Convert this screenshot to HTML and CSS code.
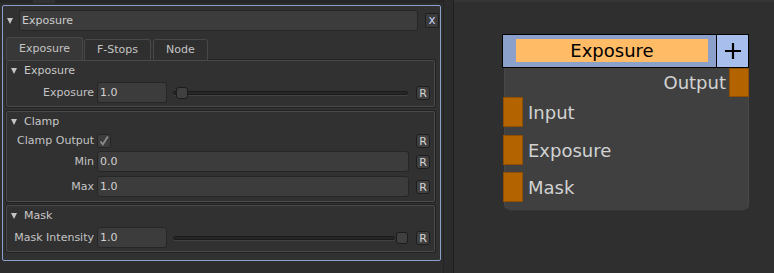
FILE: index.html
```html
<!DOCTYPE html>
<html>
<head>
<meta charset="utf-8">
<link rel="stylesheet" href="styles.css">
</head>
<body>
<div class="app">
  <div class="left">
    <div class="topstrip"><div class="topblock"></div></div>
    <div class="panel">
      <div class="titlebar">
        <span class="tri tri-big"></span>
        <div class="namefield">Exposure</div>
        <div class="close">x</div>
      </div>
      <div class="tabs">
        <div class="tab active">Exposure</div>
        <div class="tab">F-Stops</div>
        <div class="tab">Node</div>
      </div>
      <div class="tabbody">
        <div class="group g-exp">
          <div class="ghead"><span class="tri"></span><span>Exposure</span></div>
          <div class="row">
            <div class="lbl">Exposure</div>
            <div class="field short">1.0</div>
            <div class="slider">
              <div class="track"></div>
              <div class="knob knob-left"></div>
            </div>
            <div class="rbtn">R</div>
          </div>
        </div>
        <div class="group g-clamp">
          <div class="ghead"><span class="tri"></span><span>Clamp</span></div>
          <div class="row row-chk">
            <div class="lbl">Clamp Output</div>
            <div class="chk"><svg width="12" height="12" viewBox="0 0 12 12"><path d="M2.5 6.5L4.8 9.5L9.8 1.5" stroke="#8c8c8c" stroke-width="1.8" fill="none"/></svg></div>
            <div class="rbtn">R</div>
          </div>
          <div class="row">
            <div class="lbl">Min</div>
            <div class="field long">0.0</div>
            <div class="rbtn">R</div>
          </div>
          <div class="row row-gap">
            <div class="lbl">Max</div>
            <div class="field long">1.0</div>
            <div class="rbtn">R</div>
          </div>
        </div>
        <div class="group g-mask">
          <div class="ghead"><span class="tri"></span><span>Mask</span></div>
          <div class="row">
            <div class="lbl">Mask Intensity</div>
            <div class="field short">1.0</div>
            <div class="slider">
              <div class="track track-end"></div>
              <div class="knob knob-right"></div>
            </div>
            <div class="rbtn">R</div>
          </div>
        </div>
      </div>
    </div>
  </div>
  <div class="strip"></div>
  <div class="canvas">
    <div class="node">
      <div class="nhead">
        <div class="ntitle"><div class="nname">Exposure</div></div>
        <div class="nplus">
          <svg width="16" height="16" viewBox="0 0 16 16"><path d="M8 0V16M0 8H16" stroke="#000" stroke-width="2.2" fill="none"/></svg>
        </div>
      </div>
      <div class="nbody">
        <div class="prow prow-out">
          <span class="plabel">Output</span>
          <span class="port"></span>
        </div>
        <div class="prow prow-in">
          <span class="port"></span>
          <span class="plabel">Input</span>
        </div>
        <div class="prow prow-in gap8">
          <span class="port"></span>
          <span class="plabel">Exposure</span>
        </div>
        <div class="prow prow-in gap7">
          <span class="port"></span>
          <span class="plabel">Mask</span>
        </div>
      </div>
    </div>
  </div>
</div>
</body>
</html>
```

FILE: styles.css
```css
* { box-sizing: border-box; }
html, body {
  margin: 0;
  padding: 0;
  background: #2c2c2c;
  font-family: "DejaVu Sans", Verdana, sans-serif;
  font-size: 11px;
  color: #c6c6c6;
}
.app {
  display: flex;
  width: 774px;
  height: 273px;
  overflow: hidden;
}
.left {
  width: 443px;
  height: 273px;
  background: #2d2d2d;
  padding-left: 2px;
}
.topstrip {
  height: 3px;
  margin-left: -2px;
  background: #262626;
  display: flex;
}
.topblock {
  margin-left: 33px;
  width: 22px;
  height: 3px;
  background: #313131;
}
.panel {
  margin-top: 2px;
  width: 439px;
  height: 256px;
  border: 1px solid #8b9fcb;
  border-radius: 2px;
  background: #313131;
}
.tri {
  display: inline-block;
  width: 0;
  height: 0;
  border-left: 3px solid transparent;
  border-right: 3px solid transparent;
  border-top: 6px solid #c4c4c4;
}
.titlebar {
  display: flex;
  align-items: center;
  height: 21px;
  margin-top: 4px;
  padding-left: 4px;
}
.tri-big {
  margin-right: 6px;
  margin-top: 1px;
}
.namefield {
  width: 399px;
  height: 21px;
  background: #3c3c3c;
  border: 1px solid #262626;
  border-radius: 3px;
  padding-left: 2px;
  line-height: 19px;
  color: #cdcdcd;
}
.close {
  margin-left: 7px;
  width: 14px;
  height: 15px;
  background: #3b3b3b;
  border: 1px solid #1f1f1f;
  border-radius: 2px;
  color: #c2d0f0;
  font-size: 12px;
  line-height: 12px;
  text-align: center;
}
.tabs {
  display: flex;
  align-items: flex-end;
  height: 23px;
  margin-top: 6px;
  padding-left: 3px;
}
.tab {
  height: 21px;
  padding: 0 12px;
  border: 1px solid #484848;
  border-bottom: none;
  border-radius: 3px 3px 0 0;
  background: #2f2f2f;
  line-height: 20px;
  margin-right: 1px;
  color: #c4c4c4;
}
.tab + .tab + .tab { margin-left: 1px; }
.tab.active {
  height: 23px;
  background: #383838;
  padding-top: 2px;
  line-height: 18px;
}
.tabbody {
  padding-left: 3px;
}
.group {
  width: 429px;
  border: 1px solid #4a4a4a;
  border-radius: 2px;
  box-shadow: 0 0 0 1px #222;
  padding-right: 4px;
}
.g-exp { padding-bottom: 3px; }
.g-clamp { margin-top: 4px; padding-bottom: 4px; }
.g-mask { margin-top: 3px; padding-bottom: 3px; }
.ghead {
  display: flex;
  align-items: center;
  height: 19px;
  padding-left: 4px;
  color: #c8c8c8;
}
.ghead .tri {
  margin-right: 7px;
}
.row {
  display: flex;
  align-items: center;
  height: 21px;
  margin-top: 2px;
}
.row-chk {
  height: 19px;
  margin-top: 0;
  margin-bottom: 1px;
}
.row-gap { margin-top: 4px; }
.g-clamp .row-chk + .row { margin-top: 0; }
.lbl {
  width: 87px;
  text-align: right;
  white-space: nowrap;
  margin-right: 3px;
  color: #c4c4c4;
}
.field {
  height: 21px;
  background: #3c3c3c;
  border: 1px solid #262626;
  border-radius: 3px;
  padding-left: 2px;
  line-height: 20px;
  color: #d2d2d2;
}
.short { width: 70px; }
.long { width: 312px; }
.slider {
  position: relative;
  width: 235px;
  height: 14px;
  margin-left: 6px;
}
.track {
  position: absolute;
  left: 0;
  right: 0;
  top: 5px;
  height: 4px;
  background: #262626;
  border: 1px solid #1b1b1b;
  border-radius: 2px;
  box-shadow: 0 1px 0 #424242;
}
.track-end { right: 13px; }
.knob {
  position: absolute;
  top: 1px;
  width: 12px;
  height: 12px;
  background: #404040;
  border: 1px solid #1c1c1c;
  border-radius: 3px;
}
.knob-left { left: 3px; }
.knob-right { right: 0; }
.rbtn {
  margin-left: auto;
  width: 14px;
  height: 14px;
  background: #404040;
  border: 1px solid #1d1d1d;
  border-radius: 3px;
  color: #d6d6d6;
  font-size: 11px;
  line-height: 13px;
  text-align: center;
}
.chk {
  width: 14px;
  height: 14px;
  background: #3c3c3c;
  border: 1px solid #262626;
  border-radius: 2px;
  display: flex;
  align-items: center;
  justify-content: center;
}
.strip {
  width: 11px;
  height: 273px;
  background: #2b2b2b;
  border-left: 1px solid #242424;
  border-right: 1px solid #1e1e1e;
}
.canvas {
  position: relative;
  flex: 1;
  height: 273px;
  background: #2f2f2f;
  border-top: 2px solid #353535;
}
.node {
  position: absolute;
  left: 48px;
  top: 32px;
  width: 247px;
}
.nhead {
  display: flex;
  height: 34px;
  border: 1px solid #000;
}
.ntitle {
  flex: 1;
  background: #8ba1cb;
  padding: 4px 8px 4px 13px;
}
.nname {
  height: 23px;
  background: #ffbb66;
  color: #000;
  font-size: 18px;
  line-height: 23px;
  text-align: center;
}
.nplus {
  width: 32px;
  background: #a8bfed;
  border-left: 1px solid #000;
  display: flex;
  align-items: center;
  justify-content: center;
}
.nbody {
  margin-left: 2px;
  width: 245px;
  height: 143px;
  background: #404040;
  border: 1px solid #484848;
  border-top: none;
  border-bottom-color: #353535;
  border-radius: 0 0 7px 7px;
  font-size: 18px;
  color: #d2d2d2;
}
.prow {
  display: flex;
  align-items: center;
  height: 30px;
}
.prow-out {
  justify-content: flex-end;
  height: 29px;
  margin-right: -1px;
}
.prow-out .plabel { margin-right: 3px; }
.prow-in .port { margin-left: -2px; }
.prow-in .plabel { margin-left: 5px; }
.gap8 { margin-top: 8px; }
.gap7 { margin-top: 7px; }
.port {
  width: 20px;
  height: 100%;
  background: #b36300;
  border: 1px solid #8f4f00;
}
```
